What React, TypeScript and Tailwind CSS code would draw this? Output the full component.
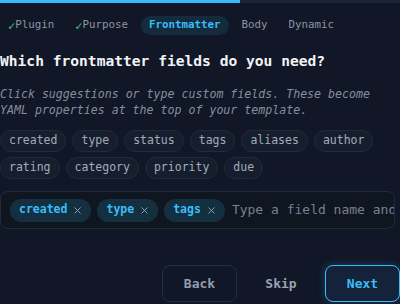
import { X } from 'lucide-react';

const suggestions = ['created', 'type', 'status', 'tags', 'aliases', 'author', 'rating', 'category', 'priority', 'due'];
const selected = ['created', 'type', 'tags'];

const steps = [
  { label: 'Plugin', done: true },
  { label: 'Purpose', done: true },
  { label: 'Frontmatter', active: true },
  { label: 'Body' },
  { label: 'Dynamic' },
];

export default function App() {
  return (
    <div
      className="w-[400px] h-[304px] overflow-hidden bg-[#111726] text-[#e5e7eb]"
      style={{ fontFamily: '"DejaVu Sans Mono", "Liberation Mono", monospace' }}
    >
      {/* Progress */}
      <div className="h-[3px] w-full bg-[#1c2536]">
        <div className="h-full w-[240px] bg-[#38bdf8]" />
      </div>

      {/* Steps */}
      <div className="mt-[13px] flex items-center gap-[5px]">
        {steps.map((s) => (
          <div
            key={s.label}
            className={
              s.active
                ? 'h-[19px] px-2 flex items-center rounded-full bg-[#132b3c] text-[#38bdf8] font-bold text-[10.8px]'
                : 'h-[19px] px-2 flex items-center text-[#8b93a3] text-[10.8px]'
            }
          >
            {s.done && <span className="text-[#3ec49b] text-[12px] leading-none">✓</span>}
            {s.label}
          </div>
        ))}
      </div>

      {/* Heading */}
      <h2 className="mt-[16px] text-[14.6px] leading-[20px] font-bold text-[#f3f4f6]">
        Which frontmatter fields do you need?
      </h2>
      <p className="mt-[15px] w-[400px] text-[11.6px] leading-[16px] italic text-[#858e9e]">
        Click suggestions or type custom fields. These become YAML properties at the top of your template.
      </p>

      {/* Suggestions */}
      <div className="mt-[12px] flex flex-wrap gap-x-[6px] gap-y-[5px]">
        {suggestions.map((s) => (
          <button
            key={s}
            className="h-[22px] px-2 flex items-center rounded-full border border-[#222b3b] bg-[#161e2d] text-[11.5px] text-[#a3acbb]"
          >
            {s}
          </button>
        ))}
      </div>

      {/* Field input */}
      <div className="mt-[12px] w-[395px] h-[38px] flex items-center gap-[6px] pl-[9px] rounded-lg border border-[#222b3b] bg-[#10161f] overflow-hidden">
        {selected.map((s) => (
          <span
            key={s}
            className="h-[23px] shrink-0 pl-[9px] pr-[8px] flex items-center gap-[5px] rounded-full bg-[#142f3f] text-[11.5px] font-semibold text-[#38bdf8]"
          >
            {s}
            <X size={11} strokeWidth={2} className="text-[#94a3b8]" />
          </span>
        ))}
        <input
          className="ml-px min-w-0 flex-1 bg-transparent text-[13px] text-[#d1d5db] placeholder:text-[#768091] outline-none"
          placeholder="Type a field name and press Enter"
        />
      </div>

      {/* Actions */}
      <div className="mt-[36px] flex justify-end gap-[6px]">
        <button className="w-[75px] h-[37px] rounded-lg border border-[#242e40] text-[13px] font-bold text-[#929db0]">
          Back
        </button>
        <button className="w-[76px] h-[37px] rounded-lg text-[13px] font-bold text-[#9aa4b4]">Skip</button>
        <button className="w-[75px] h-[37px] rounded-lg border border-[#38bdf8] bg-[#14233a] text-[13px] font-bold text-[#38bdf8] shadow-[0_0_8px_rgba(56,189,248,0.25)]">
          Next
        </button>
      </div>
    </div>
  );
}
